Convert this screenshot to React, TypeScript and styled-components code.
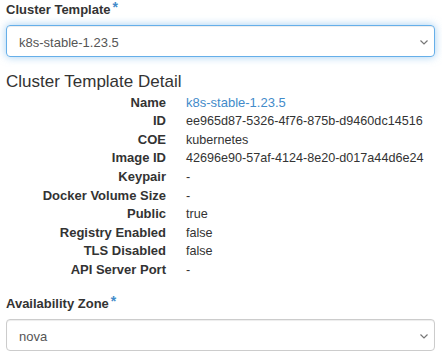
import styled, { createGlobalStyle } from 'styled-components';

const GlobalStyle = createGlobalStyle`
    body {
        margin: 0;
        background: #fff;
        font-family: "Liberation Sans", Arial, Helvetica, sans-serif;
        color: #333;
    }
`
const Page = styled.div`
    width: 442px;
    box-sizing: border-box;
    padding: 1px 7px 0 6px;
`
const FormGroup = styled.div`
    display: flex;
    flex-direction: column;
`
const Label = styled.label`
    font-size: 13px;
    font-weight: bold;
    line-height: 18px;
    margin-bottom: 6px;
`
const Required = styled.span`
    color: #428bca;
    font-size: 14px;
    line-height: 0;
    margin-left: 2px;
    vertical-align: 2px;
`
const SelectWrap = styled.div<{ $focus?: boolean }>`
    position: relative;
    height: 32px;
    box-sizing: border-box;
    border: 1px solid ${(p) => (p.$focus ? '#66afe9' : '#ccc')};
    border-radius: 4px;
    box-shadow: ${(p) =>
        p.$focus
            ? 'inset 0 1px 1px rgba(0,0,0,.075), 0 0 8px rgba(102,175,233,.6)'
            : 'inset 0 1px 1px rgba(0,0,0,.075)'};
    display: flex;
    align-items: center;
    padding: 2px 12px 0;
    font-size: 13px;
    color: #555;
`
const Chevron = styled.svg`
    position: absolute;
    right: 5px;
    top: 13px;
`
const DetailTitle = styled.h4`
    margin: 16px 0 2px;
    font-size: 17px;
    font-weight: normal;
    line-height: 1.1;
    color: #333;
`
const DetailList = styled.dl`
    display: grid;
    grid-template-columns: 160px 1fr;
    column-gap: 20px;
    margin: 0 0 16px;
    line-height: 18.57px;
`
const Term = styled.dt`
    font-size: 13px;
    font-weight: bold;
    text-align: right;
    white-space: nowrap;
`
const Value = styled.dd`
    margin: 0;
    font-size: 12.6px;
    white-space: nowrap;
`
const Link = styled.a`
    color: #428bca;
    font-size: 13px;
    text-decoration: none;
`

const details: [string, string][] = [
    ['ID', 'ee965d87-5326-4f76-875b-d9460dc14516'],
    ['COE', 'kubernetes'],
    ['Image ID', '42696e90-57af-4124-8e20-d017a44d6e24'],
    ['Keypair', '-'],
    ['Docker Volume Size', '-'],
    ['Public', 'true'],
    ['Registry Enabled', 'false'],
    ['TLS Disabled', 'false'],
    ['API Server Port', '-'],
]

const Select = ({ value, focus }: { value: string; focus?: boolean }) => (
    <SelectWrap $focus={focus}>
        {value}
        <Chevron width="10" height="7" viewBox="0 0 10 7">
            <path d="M1.5 1.5 L5 5 L8.5 1.5" fill="none" stroke="#777" strokeWidth="1.2" />
        </Chevron>
    </SelectWrap>
)

const App = () => {
    return (
        <Page>
            <GlobalStyle />
            <FormGroup>
                <Label>
                    Cluster Template<Required>*</Required>
                </Label>
                <Select value="k8s-stable-1.23.5" focus />
            </FormGroup>
            <DetailTitle>Cluster Template Detail</DetailTitle>
            <DetailList>
                <Term>Name</Term>
                <Value>
                    <Link href="#">k8s-stable-1.23.5</Link>
                </Value>
                {details.map(([k, v]) => (
                    <>
                        <Term key={k}>{k}</Term>
                        <Value key={k + '-v'}>{v}</Value>
                    </>
                ))}
            </DetailList>
            <FormGroup>
                <Label>
                    Availability Zone<Required>*</Required>
                </Label>
                <Select value="nova" />
            </FormGroup>
        </Page>
    )
}
export default App;
